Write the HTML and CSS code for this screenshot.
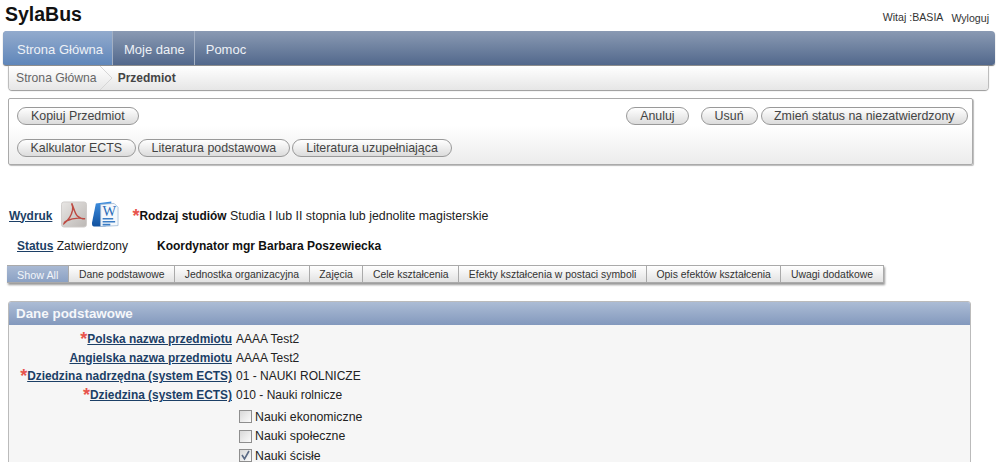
FILE: index.html
```html
<!DOCTYPE html>
<html lang="pl">
<head>
    <meta charset="UTF-8">
    <title>SylaBus</title>
    <link rel="stylesheet" href="styles.css">
</head>
<body>

    <header class="top">
        <div class="logo">SylaBus</div>
        <div class="user">
            <span>Witaj :BASIA</span>
            <a class="logout">Wyloguj</a>
        </div>
    </header>

    <nav class="nav">
        <a class="nav-item active">Strona Główna</a>
        <a class="nav-item">Moje dane</a>
        <a class="nav-item last">Pomoc</a>
    </nav>

    <div class="crumbs">
        <span>Strona Główna</span>
        <svg class="crumb-arrow" width="16" height="24" viewBox="0 0 16 24">
            <path d="M1 0 L13 12 L1 24" fill="none" stroke="#d6d6d6"/>
        </svg>
        <b>Przedmiot</b>
    </div>

    <section class="toolbar">
        <div class="toolbar-row spread">
            <button class="btn">Kopiuj Przedmiot</button>
            <div class="btn-group">
                <button class="btn cancel">Anuluj</button>
                <button class="btn">Usuń</button>
                <button class="btn tight">Zmień status na niezatwierdzony</button>
            </div>
        </div>
        <div class="toolbar-row">
            <button class="btn tight">Kalkulator ECTS</button>
            <button class="btn">Literatura podstawowa</button>
            <button class="btn">Literatura uzupełniająca</button>
        </div>
    </section>

    <div class="print-row">
        <a class="link">Wydruk</a>
        <svg class="icon-pdf" width="26" height="27" viewBox="0 0 27 27">
            <defs>
                <linearGradient id="pdfBg" x1="0" y1="0" x2="1" y2="1">
                    <stop offset="0" stop-color="#e8e6e4"/>
                    <stop offset="1" stop-color="#bcb8b5"/>
                </linearGradient>
            </defs>
            <rect x="0.5" y="0.5" width="26" height="26" rx="2.5" fill="url(#pdfBg)" stroke="#cfccca"/>
            <path d="M3 23 C7 20 11 14 12 9 C12.5 6 11.5 3 11 2 C13 5 14 12 17 15 C19 17 22 18 25 18 C20 17 12 17 6 20 C4 21 3 22 3 23 Z" fill="none" stroke="#bd4a42" stroke-width="1.5"/>
        </svg>
        <svg class="icon-word" width="27" height="27" viewBox="0 0 28 27">
            <defs>
                <linearGradient id="wordBg" x1="0" y1="0" x2="0" y2="1">
                    <stop offset="0" stop-color="#3f8fe0"/>
                    <stop offset="1" stop-color="#11519f"/>
                </linearGradient>
            </defs>
            <path d="M4 2 L20 0 L20 6 L14 26 L3 26 C0 26 0 24 0 22 Z" fill="url(#wordBg)"/>
            <path d="M9 3 L23 2 L27 6 L27 25 L9 26 Z" fill="#f4f8fc" stroke="#9db8d4" stroke-width="0.8"/>
            <text class="word-w" x="11" y="15">W</text>
            <path d="M11 18 H22 M11 21 H24 M11 24 H19" stroke="#3b7cc4" stroke-width="1.6"/>
        </svg>
        <span class="study"><span class="req">*</span><b>Rodzaj studiów</b> Studia I lub II stopnia lub jednolite magisterskie</span>
    </div>

    <div class="status-row">
        <span class="status"><a class="link">Status</a> Zatwierdzony</span>
        <b class="coord">Koordynator mgr Barbara Poszewiecka</b>
    </div>

    <div class="tabs">
        <a class="tab active">Show All</a>
        <a class="tab">Dane podstawowe</a>
        <a class="tab">Jednostka organizacyjna</a>
        <a class="tab">Zajęcia</a>
        <a class="tab">Cele kształcenia</a>
        <a class="tab">Efekty kształcenia w postaci symboli</a>
        <a class="tab">Opis efektów kształcenia</a>
        <a class="tab">Uwagi dodatkowe</a>
    </div>

    <section class="panel">
        <h2 class="panel-head">Dane podstawowe</h2>
        <div class="form">
            <div class="label"><span class="req">*</span><a class="link">Polska nazwa przedmiotu</a></div>
            <div class="value">AAAA Test2</div>
            <div class="label"><a class="link">Angielska nazwa przedmiotu</a></div>
            <div class="value">AAAA Test2</div>
            <div class="label"><span class="req">*</span><a class="link">Dziedzina nadrzędna (system ECTS)</a></div>
            <div class="value">01 - NAUKI ROLNICZE</div>
            <div class="label"><span class="req">*</span><a class="link">Dziedzina (system ECTS)</a></div>
            <div class="value">010 - Nauki rolnicze</div>
            <div class="checks">
                <label class="check"><span class="box"></span>Nauki ekonomiczne</label>
                <label class="check"><span class="box"></span>Nauki społeczne</label>
                <label class="check"><span class="box"><svg width="11" height="11" viewBox="0 0 11 11"><path d="M2 5 L4.5 9 L9 1" fill="none" stroke="#5a6a85" stroke-width="1.6"/></svg></span>Nauki ścisłe</label>
            </div>
        </div>
    </section>

</body>
</html>
```

FILE: styles.css
```css
html {
    overflow: hidden;
}

body {
    margin: 0;
    height: 462px;
    overflow: hidden;
    background: #fff;
    color: #222;
    font-family: "Liberation Sans", Arial, sans-serif;
    font-size: 12px;
}

b {
    color: #111;
}

.top {
    display: flex;
    justify-content: space-between;
    height: 31px;
    padding: 3px 11px 0 5px;
    box-sizing: border-box;
}

.logo {
    font-size: 19.5px;
    font-weight: bold;
    line-height: 23px;
    color: #111;
}

.user {
    display: flex;
    gap: 8px;
    padding-top: 8px;
    font-size: 10.6px;
    color: #333;
}

.logout {
    padding-top: 1px;
}

.nav {
    display: flex;
    height: 34px;
    margin: 0 5px 0 3px;
    background: linear-gradient(#8a9ab3, #52688c);
    border-radius: 4px 4px 3px 3px;
    box-shadow: 0 1px 1px #777;
}

.nav-item {
    padding: 0 9px 0 11px;
    border-right: 1px solid #a3b0c4;
    color: #eef1f6;
    font-size: 13px;
    line-height: 37px;
}

.nav-item.last {
    border-right: 0;
}

.nav-item.active {
    padding: 0 9px 0 14px;
    background: linear-gradient(#93abcd, #5f86ba);
    border-radius: 4px 0 0 3px;
}

.crumbs {
    display: flex;
    align-items: center;
    height: 24px;
    margin: 1px 12px 0 9px;
    padding-left: 7px;
    background: linear-gradient(#fff, #e6e6e6);
    border-radius: 0 0 3px 3px;
    box-shadow: 0 1px 1px #999, 1px 0 1px #bbb, -1px 0 1px #bbb;
    color: #666;
    font-size: 12.2px;
}

.crumb-arrow {
    margin: 0 3px 0 2px;
}

.crumbs b {
    color: #444;
    font-size: 12px;
}

.toolbar {
    width: 965px;
    height: 67px;
    margin: 8px 0 0 8px;
    padding: 8px 4px 0 8px;
    box-sizing: border-box;
    border: 1px solid #aaa;
    border-radius: 2px;
    background: linear-gradient(#fff 40%, #ececec);
    box-shadow: 1px 1px 1px #bbb;
}

.toolbar-row {
    display: flex;
    gap: 2px;
    height: 18px;
    margin-bottom: 14px;
}

.spread {
    justify-content: space-between;
}

.btn-group {
    display: flex;
    gap: 3px;
}

.btn {
    height: 18px;
    margin: 0;
    padding: 0 13px;
    border: 1px solid #999;
    border-radius: 9px;
    background: linear-gradient(#fff, #dcdcdc);
    color: #444;
    font-family: "Liberation Sans", Arial, sans-serif;
    font-size: 12.4px;
    line-height: 15px;
}

.btn.tight {
    padding: 0 12.5px;
}

.cancel {
    margin-right: 9px;
}

.print-row {
    display: flex;
    align-items: center;
    height: 27px;
    margin: 36px 0 0 9px;
}

.print-row .link,
.study {
    position: relative;
    top: 1px;
}

.link {
    color: #1c3f66;
    font-size: 11.9px;
    font-weight: bold;
    text-decoration: underline;
}

.icon-pdf {
    margin-left: 9px;
}

.icon-word {
    margin-left: 5px;
}

.word-w {
    font-family: "Liberation Serif", serif;
    font-size: 15px;
    fill: #2a6cb8;
}

.study {
    margin-left: 13px;
    color: #222;
    font-size: 12.4px;
}

.study b {
    font-size: 11.9px;
}

.req {
    color: #e8544c;
    font-size: 18px;
    font-weight: bold;
    line-height: 12px;
    vertical-align: -2px;
}

.status-row {
    display: flex;
    height: 16px;
    margin: 10px 0 0 17px;
    line-height: 16px;
}

.status {
    width: 140px;
}

.coord {
    color: #111;
}

.tabs {
    display: inline-flex;
    margin: 11px 0 0 7px;
    height: 16px;
    border: 1px solid #aaa;
    border-left: 0;
    background: linear-gradient(#fff, #e2e2e2);
    box-shadow: 1px 2px 2px #999;
}

.tab {
    padding: 0 9.6px;
    border-right: 1px solid #aaa;
    color: #333;
    font-size: 10.4px;
    line-height: 18px;
}

.tab:last-child {
    border-right: 0;
}

.tab.active {
    padding: 0 10px;
    background: linear-gradient(#a9b9d3, #8ba1c4);
    color: #f2f5f9;
    font-size: 10.8px;
}

.panel {
    width: 963px;
    height: 200px;
    margin: 18px 0 0 8px;
    box-sizing: border-box;
    border: 1px solid #bbb;
    border-radius: 3px 3px 0 0;
    background: #f6f6f6;
}

.panel-head {
    height: 23px;
    margin: 0;
    padding-left: 7px;
    background: linear-gradient(#acbcd5, #8399bd);
    border-radius: 2px 2px 0 0;
    color: #f5f7fa;
    font-size: 13.4px;
    line-height: 23px;
}

.form {
    display: grid;
    grid-template-columns: 223px 1fr;
    column-gap: 4px;
    grid-auto-rows: 18.7px;
    padding-top: 5px;
}

.label {
    text-align: right;
    line-height: 18px;
}

.value {
    line-height: 18px;
}

.checks {
    grid-column: 2;
    display: flex;
    flex-direction: column;
    gap: 5.5px;
    padding: 5px 0 0 3px;
    font-size: 12.3px;
}

.check {
    display: flex;
    align-items: center;
    gap: 3px;
    height: 14px;
}

.box {
    display: block;
    width: 11px;
    height: 11px;
    border: 1px solid #8e8e8e;
    background: linear-gradient(135deg, #d8d8d8, #fbfbfb);
}

.box svg {
    display: block;
}
```
